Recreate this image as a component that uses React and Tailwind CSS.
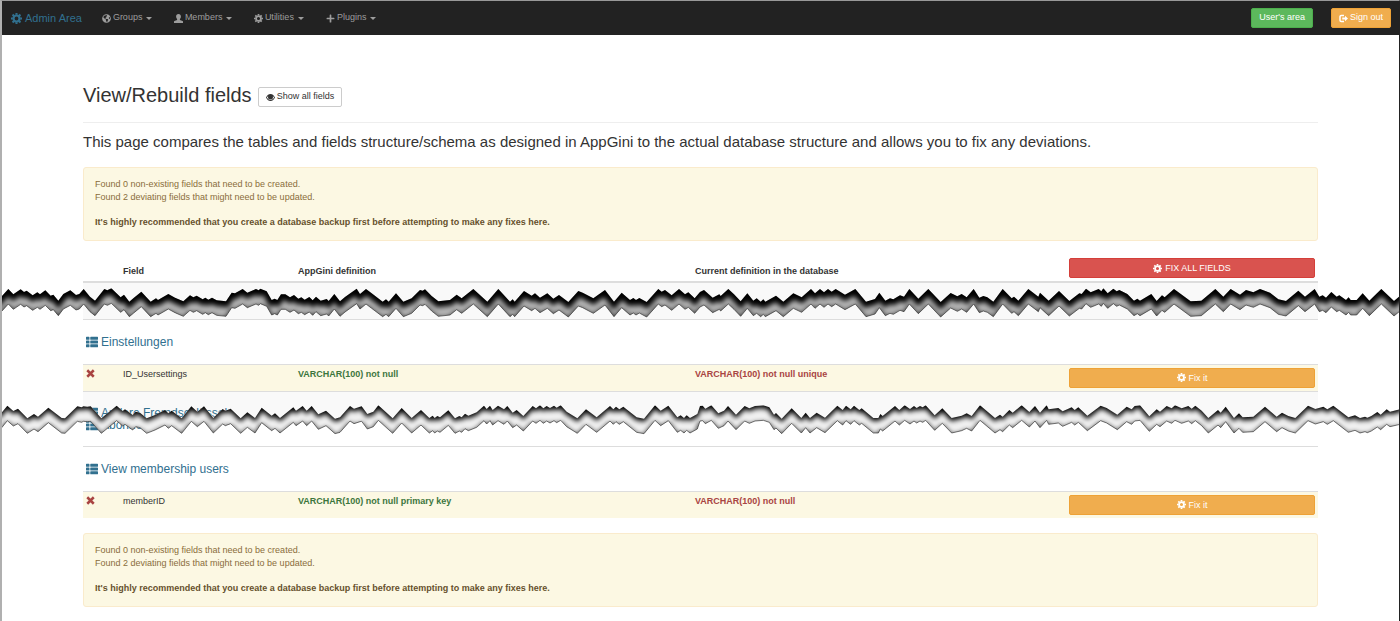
import { FaGlobeAmericas, FaPlus, FaThList } from "react-icons/fa";

// Each piece is [dx, dy, points], three units to a pixel.
const TEAR_DARK = [
  [0, -105, "0,144 6,138 25,117 40,133 62,118 72,126 80,122 98,136 112,127 120,133 136,121 152,137 160,134 175,152 190,132 211,121 228,135 238,132 251,117 270,140 285,152 313,117 322,121 334,115 362,142 372,134 388,155 400,145 424,125 452,155 468,145 474,150 505,132 525,143 550,154 570,136 580,142 590,137 608,148 616,143 625,149 636,143 650,151 678,154 695,128 705,130 728,117 742,128 768,117 776,121 781,116 800,124 815,150 824,146 832,150 843,133 856,133 870,142 882,135 895,146 904,142 914,149 928,141 938,151 948,140 962,152 980,147 986,153 1003,132 1020,154 1035,141 1070,116"],
  [1080, -45, "0,72 18,57 35,70 68,95 78,88 86,95 108,70 130,95 155,85 180,60 188,62 195,58 215,78 235,94 270,90 290,74 305,85 340,57 382,95 415,57 450,95 458,88 464,95 492,63 515,77 525,70 540,83 562,70 580,86 597,75 625,96 655,63 668,68 700,85 735,60 762,95 785,68 810,90 820,84 828,90 838,84 860,96 895,57 905,65 915,60 935,76 957,57 975,73 985,67 1004,85"],
  [2100, -45, "0,66 12,60 38,83 58,73 62,78 85,57 102,73 122,94 142,70 160,92 170,85 182,95 190,88 196,95 228,77 250,95 280,70 305,82 333,57 345,70 360,57 372,67 384,57 395,65 407,57 435,74 466,57 498,95 525,87 538,68 556,92 570,85 580,88 600,76 612,80 628,57 655,86 685,57 722,96 752,69 772,79 785,72 800,82 821,57 838,83 850,78 862,82 880,95 908,57 935,85 942,80 955,92 985,57 1015,80"],
  [3120, -105, "0,128 26,152 57,123 88,153 118,130 125,132 138,116 152,127 176,117 184,124 190,115 203,130 220,116 230,124 238,120 262,132 282,152 292,146 300,152 334,132 350,153 366,136 374,142 402,117 452,154 484,152 526,117 550,140 572,117 600,134 618,120 640,127 660,117 690,128 715,148 738,153 775,122 795,140 824,117 838,140 848,136 858,143 874,126 890,140 898,136 918,150 926,142 932,150 950,150 968,130 988,152 1024,117 1062,153 1080,138"],
];

const TEAR_LIGHT = [
  [0, -210, "0,253 6,247 22,227 40,243 54,236 82,265 102,252 114,260 145,233 185,264 195,265 232,229 245,232 250,229 262,230 272,229 304,265 350,227 368,243 375,238 398,255 407,245 420,248 440,265 465,255 495,240 505,250 515,242 545,265 574,229 592,245 612,229 640,264 668,237 676,242 692,236 722,265 742,247 765,264 785,233 815,257 825,250 840,264 880,232 888,242 908,228 920,242 935,228 955,253 978,242 1005,266 1020,262 1050,228 1062,236"],
  [1080, -30, "0,50 5,49 22,72 40,65 55,46 98,85 125,54 155,84 183,60 208,84 218,77 224,84 232,78 240,82 265,61 285,85 298,78 305,82 315,71 325,77 350,67 372,47 380,57 390,47 398,60 414,47 432,58 442,48 458,68 470,60 490,78 518,48 528,55 540,46 550,55 560,48 570,54 582,47 590,53 602,46 620,65 652,85 678,58 710,82 750,48 760,58 768,50 778,58 790,50 830,82 852,86 885,46 902,62 925,47 952,82 962,76 972,84 980,76 990,84 1012,72"],
  [2100, -30, "0,48 8,47 16,56 34,46 55,70 72,62 84,48 108,74 122,60 134,48 148,55 165,48 190,46 208,52 222,74 228,69 245,86 275,55 304,84 317,68 330,84 350,68 375,83 412,47 428,60 438,47 452,58 462,47 478,60 485,55 520,84 535,84 541,72 548,78 585,48 598,60 614,46 630,57 642,48 650,54 660,48 668,52 677,46 704,76 727,55 755,84 785,77 800,70 815,78 840,46 885,84 900,74 908,80 928,60 938,68 965,46 988,66 1005,48"],
  [3120, -450, "0,488 20,466 26,478 55,474 68,484 95,472 104,480 115,472 142,497 182,467 200,474 232,494 260,470 275,478 284,468 300,466 328,499 350,478 360,485 380,468 395,475 405,466 425,475 445,468 455,476 466,467 485,482 505,504 534,480 542,488 557,470 582,504 597,490 608,502 640,500 675,470 710,500 726,488 745,498 766,504 804,467 826,477 850,470 862,478 880,467 925,502 945,496 960,504 975,500 982,503 994,498 1012,486 1022,494 1040,478 1050,485 1080,478"],
];

function toPoints(pieces) {
  return pieces.flatMap(([dx, dy, text]) =>
    text.split(" ").map(pair => {
      const [x, y] = pair.split(",").map(Number);
      return [x + dx, y + dy];
    })
  );
}

function TornStrip({ id, pieces, paper, shade, className }) {
  const top = toPoints(pieces);
  const bottom = top.map(([x, y]) => [x, y + 45]);
  const band = [...top, ...[...bottom].reverse()].join(" ");
  const above = [[0, -60], ...top.map(([x, y]) => [x, y + 4]), [4200, -60]].join(" ");

  return (
    <svg
      className={`absolute inset-x-0 h-9 w-full ${className}`}
      viewBox="6 0 4191 108"
      preserveAspectRatio="none"
      aria-hidden="true"
    >
      <defs>
        <clipPath id={`${id}-band`}>
          <polygon points={band} />
        </clipPath>
        <filter id={`${id}-soft`} x="-1%" y="-50%" width="102%" height="200%">
          <feGaussianBlur stdDeviation="8" />
        </filter>
      </defs>
      <g clipPath={`url(#${id}-band)`}>
        <rect width="4200" height="108" fill={paper} />
        <g filter={`url(#${id}-soft)`}>
          <polygon points={above} fill="#000" stroke="#000" strokeWidth={shade} />
          <polyline points={bottom.map(([x, y]) => [x, y + 10]).join(" ")} fill="none" stroke="#000" strokeWidth="10" />
        </g>
      </g>
      <polyline points={bottom.join(" ")} fill="none" stroke="#333" strokeWidth="2" />
    </svg>
  );
}

function Glyph({ className = "h-[9px] w-[9px]", children }) {
  return (
    <svg className={`shrink-0 ${className}`} viewBox="0 0 18 18" fill="currentColor" aria-hidden="true">
      {children}
    </svg>
  );
}

function CogIcon({ className }) {
  return (
    <Glyph className={className}>
      <circle cx="9" cy="9" r="4.900" fill="none" stroke="currentColor" strokeWidth="3.600" />
      <path
        d="M9 0v3M9 15v3M0 9h3M15 9h3M2.600 2.600l2.200 2.200M13.200 13.200l2.200 2.200M2.600 15.400l2.200-2.200M13.200 4.800l2.200-2.200"
        stroke="currentColor"
        strokeWidth="3.400"
      />
    </Glyph>
  );
}

function UserIcon() {
  return (
    <Glyph>
      <path d="M9 0c3.200 0 4.800 2 4.800 5 0 2-.8 4-2 5.200v1.600l5.400 2.200c.6.300.8.800.8 1.500V18H0v-2.500c0-.7.200-1.200.8-1.500l5.400-2.200v-1.600C5 9 4.200 7 4.200 5 4.200 2 5.800 0 9 0z" />
    </Glyph>
  );
}

function EyeIcon() {
  return (
    <Glyph>
      <path
        fillRule="evenodd"
        d="M9 2c4.200 0 7.300 3.300 9 7-1.700 3.700-4.800 7-9 7s-7.300-3.300-9-7c1.700-3.700 4.800-7 9-7zM4.600 5.800C3.300 6.700 2.500 7.800 1.900 9c1.500 2.900 4 5 7.100 5s5.600-2.100 7.100-5c-.6-1.200-1.400-2.300-2.700-3.200.4.800.6 1.500.6 2.400a5 5 0 0 1-10 0c0-.9.200-1.600.6-2.400z"
      />
    </Glyph>
  );
}

function SignOutIcon() {
  return (
    <Glyph>
      <path d="M10 3H4.500A2.500 2.500 0 0 0 2 5.500v7A2.500 2.500 0 0 0 4.500 15H10" fill="none" stroke="currentColor" strokeWidth="3" />
      <path d="M6.500 7H12V3.500L18 9l-6 5.500V11H6.500z" />
    </Glyph>
  );
}

function RemoveIcon() {
  return (
    <Glyph>
      <path d="M2.500 2.500l13 13M15.500 2.500l-13 13" stroke="currentColor" strokeWidth="5" />
    </Glyph>
  );
}

const MENUS = [
  { label: "Groups", icon: <FaGlobeAmericas className="h-[9px] w-[9px]" />, width: "w-[72px]" },
  { label: "Members", icon: <UserIcon />, width: "w-20" },
  { label: "Utilities", icon: <CogIcon />, width: "w-[72px]" },
  { label: "Plugins", icon: <FaPlus className="h-[9px] w-[9px]" />, width: "w-[72px]" },
];

function Navbar() {
  return (
    <nav className="flex h-[34px] items-center bg-[#222] pr-2 pl-[9px] text-[9px] text-[#9d9d9d]">
      <a href="#admin" className="mr-5 flex items-center gap-[3px] text-[11px] text-[#31708f]">
        <CogIcon className="h-[11px] w-[11px]" />
        Admin Area
      </a>
      <div className="flex flex-1">
        {MENUS.map(menu => (
          <button key={menu.label} type="button" className={`flex items-center gap-[2px] ${menu.width}`}>
            {menu.icon}
            {menu.label}
            <span className="ml-[2px] border-x-[3px] border-t-[3px] border-x-transparent border-t-current" />
          </button>
        ))}
      </div>
      <button type="button" className="h-5 rounded-[2px] border border-[#4cae4c] bg-[#5cb85c] px-[7px] text-white">
        User's area
      </button>
      <button
        type="button"
        className="ml-[18px] flex h-5 items-center gap-[2px] rounded-[2px] border border-[#eea236] bg-[#f0ad4e] px-[7px] text-white"
      >
        <SignOutIcon />
        Sign out
      </button>
    </nav>
  );
}

function Notice() {
  return (
    <div className="rounded-[3px] border border-[#faebcc] bg-[#fcf8e3] px-[11px] pt-[10px] pb-[11px] leading-[13px] text-[#8a6d3b]">
      <p>Found 0 non-existing fields that need to be created.</p>
      <p>Found 2 deviating fields that might need to be updated.</p>
      <p className="mt-3 font-bold text-[#66512c]">
        It's highly recommended that you create a database backup first before attempting to make any fixes here.
      </p>
    </div>
  );
}

function TableName({ children }) {
  return (
    <a href="#table" className="flex items-center gap-[3px] pl-[3px] text-[12px] leading-3 text-[#31708f]">
      <FaThList className="h-3 w-3" />
      {children}
    </a>
  );
}

function FieldRow({ name, expected, actual }) {
  return (
    <tr className="h-[27px] border-t border-[#ddd] bg-[#fcf8e3] align-top leading-3">
      <td className="pt-1 pl-[3px] text-[#a94442]">
        <RemoveIcon />
      </td>
      <td className="pt-[3px]">{name}</td>
      <td className="pt-[3px] font-bold text-[#3c763d]">{expected}</td>
      <td className="pt-[3px] font-bold text-[#a94442]">{actual}</td>
      <td className="pt-[3px] pr-[3px]">
        <button
          type="button"
          className="flex h-5 w-full items-center justify-center gap-[3px] rounded-[2px] border border-[#eea236] bg-[#f0ad4e] text-white"
        >
          <CogIcon />
          Fix it
        </button>
      </td>
    </tr>
  );
}

export default function App() {
  return (
    <div className="relative min-h-screen border-t border-r border-l-2 border-t-[#999] border-r-[#222] border-l-[#b0b0b0] bg-white font-['Liberation_Sans',Arial,sans-serif] text-[9px] text-[#333]">
      <Navbar />
      <main className="mx-[81px] pt-12 pb-3">
        <header className="flex h-[40px] items-start gap-[6px] border-b border-[#eee]">
          <h1 className="text-[20px] leading-6">View/Rebuild fields</h1>
          <button type="button" className="mt-1 flex h-5 items-center gap-[2px] rounded-[2px] border border-[#ccc] px-[7px]">
            <EyeIcon />
            Show all fields
          </button>
        </header>
        <p className="mt-[7px] mb-[13px] text-[15px] leading-6">
          This page compares the tables and fields structure/schema as designed in AppGini to the actual database
          structure and allows you to fix any deviations.
        </p>
        <Notice />
        <table className="mt-4 mb-[15px] w-full table-fixed border-collapse text-left">
          <colgroup>
            <col className="w-[40px]" />
            <col className="w-[175px]" />
            <col className="w-[397px]" />
            <col />
            <col className="w-[249px]" />
          </colgroup>
          <thead>
            <tr className="h-[25px] border-b-2 border-[#ddd] leading-3">
              <th />
              <th className="pb-1 align-bottom">Field</th>
              <th className="pb-1 align-bottom">AppGini definition</th>
              <th className="pb-1 align-bottom">Current definition in the database</th>
              <th className="pr-[3px] pb-[3px] align-bottom">
                <button
                  type="button"
                  className="flex h-5 w-full items-center justify-center gap-[3px] rounded-[2px] border border-[#d43f3a] bg-[#d9534f] font-normal text-white"
                >
                  <CogIcon />
                  FIX ALL FIELDS
                </button>
              </th>
            </tr>
          </thead>
          <tbody>
            <tr className="h-[37px] bg-[#f9f9f9]">
              <td colSpan={5} />
            </tr>
            <tr className="h-[45px] border-t border-[#ddd]">
              <td colSpan={5}>
                <TableName>Einstellungen</TableName>
              </td>
            </tr>
            <FieldRow name="ID_Usersettings" expected="VARCHAR(100) not null" actual="VARCHAR(100) not null unique" />
            <tr className="h-[28px] border-t border-[#ddd] bg-[#f9f9f9] align-bottom">
              <td colSpan={5}>
                <TableName>Andere Fremdschlüssel</TableName>
              </td>
            </tr>
            <tr className="h-[27px] align-top">
              <td colSpan={5}>
                <TableName>Abonnent</TableName>
              </td>
            </tr>
            <tr className="h-[45px] border-t border-[#ddd]">
              <td colSpan={5}>
                <TableName>View membership users</TableName>
              </td>
            </tr>
            <FieldRow name="memberID" expected="VARCHAR(100) not null primary key" actual="VARCHAR(100) not null" />
          </tbody>
        </table>
        <Notice />
      </main>
      <TornStrip id="dark" pieces={TEAR_DARK} paper="#b4b4b4" shade={26} className="top-[284px]" />
      <TornStrip id="light" pieces={TEAR_LIGHT} paper="#f0f0f0" shade={10} className="top-[399px]" />
    </div>
  );
}
